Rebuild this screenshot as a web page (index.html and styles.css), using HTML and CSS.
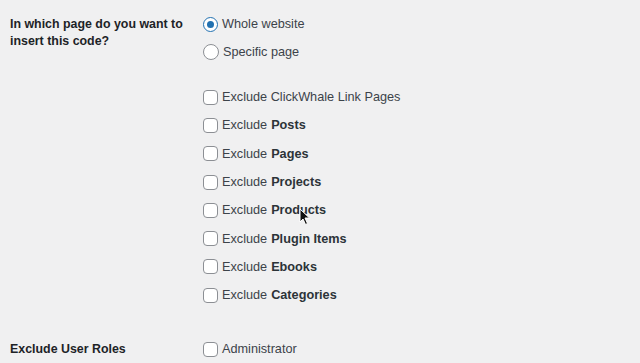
FILE: index.html
```html
<!DOCTYPE html>
<html lang="en">
<head>
    <meta charset="UTF-8">
    <title>Insert code settings</title>
    <link rel="stylesheet" href="styles.css">
</head>
<body>
    <div class="form-table">
        <div class="field-label">In which page do you want to insert this code?</div>
        <div class="field-body">
            <label class="option"><span class="radio checked"></span>Whole website</label>
            <label class="option"><span class="radio"></span>Specific page</label>

            <div class="exclude-list">
                <label class="option"><span class="check"></span>Exclude ClickWhale Link Pages</label>
                <label class="option"><span class="check"></span>Exclude <b>Posts</b></label>
                <label class="option"><span class="check"></span>Exclude <b>Pages</b></label>
                <label class="option"><span class="check"></span>Exclude <b>Projects</b></label>
                <label class="option cursor-here"><span class="check"></span>Exclude <b>Products</b>
                    <svg class="cursor" width="12" height="18" viewBox="0 0 12 18">
                        <path d="M1 1 L1 14 L4 11 L6.5 16.5 L8.5 15.5 L6 10 L10.5 10 Z" fill="#111" stroke="#fff" stroke-width="1"/>
                    </svg>
                </label>
                <label class="option"><span class="check"></span>Exclude <b>Plugin Items</b></label>
                <label class="option"><span class="check"></span>Exclude <b>Ebooks</b></label>
                <label class="option"><span class="check"></span>Exclude <b>Categories</b></label>
            </div>
        </div>

        <div class="field-label roles">Exclude User Roles</div>
        <div class="field-body roles">
            <label class="option"><span class="check"></span>Administrator</label>
        </div>
    </div>
</body>
</html>
```

FILE: styles.css
```css
body {
    margin: 0;
    background-color: #f0f0f1;
    color: #3c434a;
    font-family: 'Liberation Sans', Arial, sans-serif;
    font-size: 12.7px;
}
.form-table {
    display: grid;
    grid-template-columns: 193px 1fr;
    padding: 10px 0 0 10px;
}
.field-label {
    color: #1d2327;
    font-weight: bold;
    font-size: 12.4px;
    line-height: 17px;
    padding-top: 6px;
    width: 186px;
}
.field-label.roles {
    padding-top: 0;
    line-height: 28px;
    margin-top: 26px;
}
.field-body.roles {
    margin-top: 26px;
}
.option {
    display: flex;
    align-items: center;
    height: 28px;
    gap: 4px;
    color: #3c434a;
}
.option b {
    color: #2c3338;
    font-weight: bold;
}
.exclude-list {
    margin-top: 17px;
}
.exclude-list .option {
    height: 28.3px;
}
.radio {
    width: 14px;
    height: 14px;
    border: 1px solid #8c8f94;
    border-radius: 50%;
    background-color: #fff;
    position: relative;
    flex-shrink: 0;
}
.radio.checked {
    border-color: #2271b1;
    border-width: 1.5px;
    width: 13px;
    height: 13px;
}
.radio.checked::after {
    content: "";
    position: absolute;
    left: 3px;
    top: 3px;
    width: 7px;
    height: 7px;
    border-radius: 50%;
    background-color: #2271b1;
}
.check {
    width: 13px;
    height: 13px;
    border: 1px solid #8c8f94;
    border-radius: 4px;
    background-color: #fff;
    flex-shrink: 0;
}
.cursor-here {
    position: relative;
}
.cursor {
    position: absolute;
    left: 96px;
    top: 12px;
}
```
